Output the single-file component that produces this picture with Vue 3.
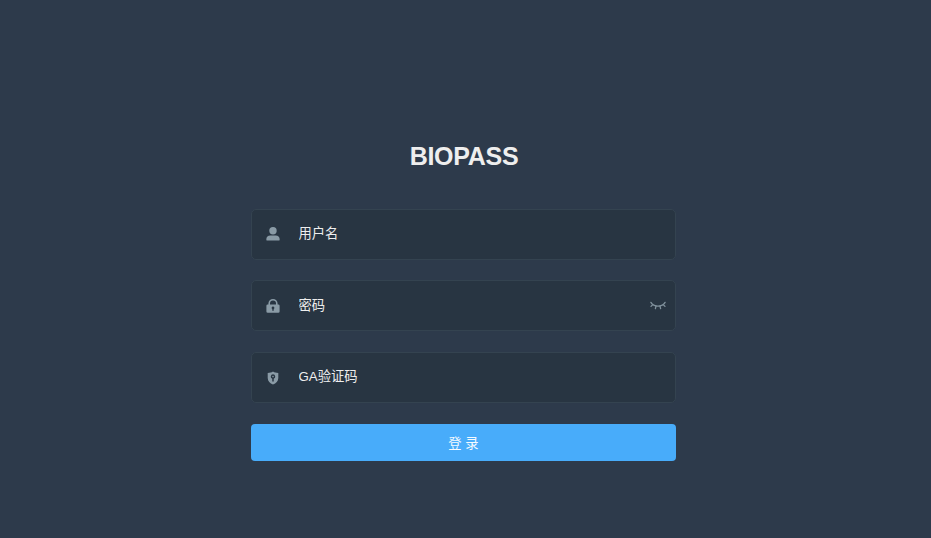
<script setup>
import { ref } from 'vue'

const form = ref({ username: '', password: '', code: '' })
const fields = [
  { key: 'username', label: '用户名', icon: 'user', type: 'text' },
  { key: 'password', label: '密码', icon: 'lock', type: 'password' },
  { key: 'code', label: 'GA验证码', icon: 'shield', type: 'text' },
]
</script>

<template>
  <main class="login">
    <form class="form" @submit.prevent>
      <h1 class="title">BIOPASS</h1>
      <label v-for="f in fields" :key="f.key" class="field">
        <svg v-if="f.icon === 'user'" class="icon" viewBox="0 0 14 14">
          <circle cx="7" cy="3.800" r="3.700" />
          <path d="M.3 12.400C.3 9.800 2 8.500 4.300 8.500h5.400c2.300 0 4 1.300 4 3.900q0 1.200-1.200 1.200h-11Q.3 13.600.3 12.400z" />
        </svg>
        <svg v-else-if="f.icon === 'lock'" class="icon" viewBox="0 0 14 14">
          <path d="M3.200 6V4.600a3.800 3.800 0 0 1 7.600 0V6" class="shackle" />
          <path fill-rule="evenodd" d="M1.700 5.400h10.600q1.300 0 1.300 1.300v5.700q0 1.300-1.300 1.300H1.700Q.4 13.700.4 12.400V6.700q0-1.300 1.300-1.300zM7 7.500a1.400 1.400 0 0 0-.7 2.600v1.700h1.400v-1.700A1.400 1.400 0 0 0 7 7.500z" />
        </svg>
        <svg v-else class="icon" viewBox="0 0 14 14">
          <path fill-rule="evenodd" d="M7 .5c1.500 1 3.200 1.400 5.300 1.500v5c0 3.300-2.300 5.400-5.300 6.600-3-1.200-5.300-3.300-5.300-6.600v-5C3.800 1.900 5.500 1.500 7 .5zM7 3.300a2.300 2.300 0 0 0-.75 4.450V10.500h1.500V7.750A2.300 2.300 0 0 0 7 3.300zM7 4.800a.8.8 0 1 1 0 1.600.8.8 0 0 1 0-1.600z" />
        </svg>
        <input v-model="form[f.key]" class="input" :type="f.type" :placeholder="f.label" />
        <svg v-if="f.type === 'password'" class="eye" viewBox="0 0 16 10">
          <path d="M.9 1.400C2.300 3.900 4.900 5.200 8 5.200s5.700-1.300 7.100-3.800M2.900 3.500 1 5.400M13.100 3.500l1.900 1.900M6 5l-.6 2.700M10 5l.6 2.700" />
        </svg>
      </label>
      <button class="submit" type="submit">登 录</button>
    </form>
  </main>
</template>

<style>
body {
  background: #2d3a4b;
}
</style>

<style scoped>
.login {
  box-sizing: border-box;
  min-height: 538px;
  padding: 142px 0 0 251px;
  background: #2d3a4b;
  font-family: "Liberation Sans", "Noto Sans CJK SC", sans-serif;
}
.form {
  width: 425px;
}
.title {
  margin: 0 0 38.700px;
  padding-left: 1px;
  font-size: 25px;
  line-height: 28px;
  font-weight: 700;
  letter-spacing: -0.300px;
  color: #eee;
  text-align: center;
}
.field {
  box-sizing: border-box;
  display: flex;
  align-items: center;
  height: 51px;
  margin-bottom: 20.700px;
  padding: 0 9px 0 14px;
  border: 1px solid #344350;
  border-radius: 5px;
  background: #283542;
}
.icon {
  flex: none;
  width: 14px;
  height: 14px;
  fill: #8a9ba6;
}
.shackle {
  fill: none;
  stroke: #8a9ba6;
  stroke-width: 1.600;
}
.input {
  flex: 1;
  min-width: 0;
  height: 46px;
  margin: 0 0 1.600px 18.500px;
  padding: 0;
  border: 0;
  outline: 0;
  background: transparent;
  font: 13.300px "Liberation Sans", "Noto Sans CJK SC", sans-serif;
  color: #fff;
}
.input::placeholder {
  color: #eee;
  opacity: 1;
}
.eye {
  flex: none;
  width: 16px;
  height: 10px;
  fill: none;
  stroke: #80919c;
  stroke-width: 1.300;
  stroke-linecap: round;
}
.submit {
  display: block;
  width: 100%;
  height: 37.500px;
  padding: 0 0 1px;
  border: 0;
  border-radius: 4px;
  background: #48acfa;
  color: #f4faff;
  font: 13.300px "Liberation Sans", "Noto Sans CJK SC", sans-serif;
}
</style>
